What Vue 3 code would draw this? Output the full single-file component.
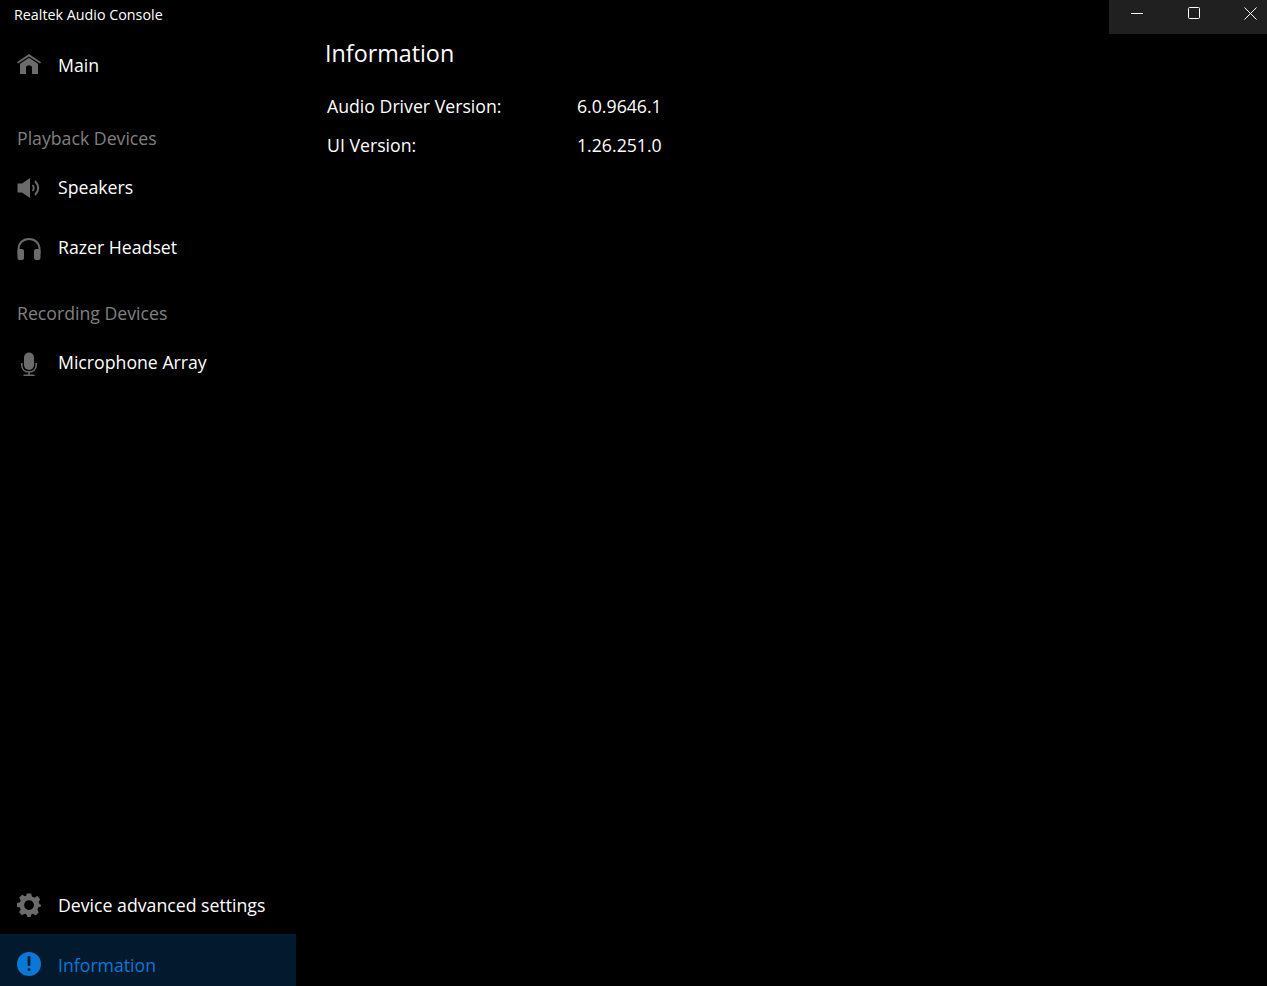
<script setup>
const rows = [
  { label: 'Audio Driver Version:', value: '6.0.9646.1' },
  { label: 'UI Version:', value: '1.26.251.0' },
]
</script>

<template>
  <div class="app">
    <header class="titlebar">
      <div class="app-title">Realtek Audio Console</div>
      <div class="controls">
        <div class="ctl">
          <svg width="12" height="12" viewBox="0 0 12 12"><path d="M0 6.5H12" stroke="#fff" stroke-width="1" /></svg>
        </div>
        <div class="ctl">
          <svg width="12" height="12" viewBox="0 0 12 12"><rect x="0.5" y="0.5" width="11" height="11" rx="1" fill="none" stroke="#fff" stroke-width="1" /></svg>
        </div>
        <div class="ctl">
          <svg width="13" height="13" viewBox="0 0 13 13"><path d="M0.5 0.5L12.5 12.5M12.5 0.5L0.5 12.5" stroke="#fff" stroke-width="1" /></svg>
        </div>
      </div>
    </header>
    <div class="body">
      <aside class="sidebar">
        <div class="nav-item">
          <svg class="ico" width="24" height="24" viewBox="0 0 24 24">
            <path fill="#6b6b6b" d="M12 1 L24 9.3 L23 10.6 L12 3.4 L1 10.6 L0 9.3Z" />
            <path fill="#6b6b6b" d="M12 4.8 L21 10.8 V21 H15 V15 Q15 12.2 12 12.2 Q9 12.2 9 15 V21 H3 V10.8Z" />
          </svg>
          <span>Main</span>
        </div>
        <div class="section first">Playback Devices</div>
        <div class="nav-item">
          <svg class="ico low1" width="24" height="24" viewBox="0 0 24 24">
            <path fill="#6b6b6b" d="M0.5 7.5 H5 L13 2 V22 L5 16.5 H0.5Z" />
            <path fill="none" stroke="#6b6b6b" stroke-width="1.8" d="M15.5 9 Q18 12 15.5 15" />
            <path fill="none" stroke="#6b6b6b" stroke-width="2" d="M18 5 Q24.5 12 18 19" />
          </svg>
          <span>Speakers</span>
        </div>
        <div class="nav-item">
          <svg class="ico low2" width="24" height="24" viewBox="0 0 24 24">
            <path fill="none" stroke="#6b6b6b" stroke-width="2" d="M1.5 17 V12.5 C1.5 6 6 2 12 2 C18 2 22.5 6 22.5 12.5 V17" />
            <rect x="0.5" y="12" width="6.5" height="11" rx="2" fill="#6b6b6b" />
            <rect x="17" y="12" width="6.5" height="11" rx="2" fill="#6b6b6b" />
          </svg>
          <span>Razer Headset</span>
        </div>
        <div class="section">Recording Devices</div>
        <div class="nav-item">
          <svg class="ico low2" width="24" height="24" viewBox="0 0 24 24">
            <rect x="7" y="0.5" width="10" height="17.5" rx="5" fill="#6b6b6b" />
            <path fill="none" stroke="#6b6b6b" stroke-width="1.6" d="M4.8 11 V13 C4.8 17.5 7.8 20 12 20 C16.2 20 19.2 17.5 19.2 13 V11 M12 20 V23 M6.5 23.2 H17.5" />
          </svg>
          <span>Microphone Array</span>
        </div>
        <div class="spacer"></div>
        <div class="nav-item settings">
          <svg class="ico" width="24" height="24" viewBox="0 0 24 24">
            <path fill="#6b6b6b" fill-rule="evenodd" d="M9.8 0.5 H14.2 L14.9 3.6 L17.5 4.7 L20.2 3 L23.2 6.2 L21.5 8.9 L22.5 11 L24 12 V13.2 L21.2 14.6 L20.4 16.6 L21.7 19.5 L18.7 22.4 L16 20.8 L14.3 21.6 L13.6 24 H10.4 L9.6 21.4 L7.8 20.7 L5 22.2 L2.1 19.2 L3.7 16.5 L2.9 14.6 L0 13.7 V10 L3 9.3 L3.7 7.4 L2.2 4.6 L5.2 1.7 L7.9 3.3 L9.2 2.8Z M12 7.2 A4.9 4.9 0 1 0 12.01 7.2Z" />
          </svg>
          <span>Device advanced settings</span>
        </div>
        <div class="nav-item active">
          <svg class="ico" width="24" height="24" viewBox="0 0 24 24">
            <circle cx="12" cy="12" r="12" fill="#0a78d7" />
            <rect x="10.6" y="4" width="2.8" height="10" rx="1" fill="#04192c" />
            <circle cx="12" cy="17.6" r="1.5" fill="#04192c" />
          </svg>
          <span>Information</span>
        </div>
      </aside>
      <main class="content">
        <h1 class="heading">Information</h1>
        <div v-for="row in rows" :key="row.label" class="row">
          <div class="label">{{ row.label }}</div>
          <div>{{ row.value }}</div>
        </div>
      </main>
    </div>
  </div>
</template>

<style>
html, body { margin: 0; background: #000; }
</style>

<style scoped>
.app {
  width: 1267px;
  height: 986px;
  overflow: hidden;
  background: #000;
  color: #fff;
  font-family: "Open Sans", "Noto Sans", sans-serif;
  display: flex;
  flex-direction: column;
}
.titlebar {
  height: 35px;
  flex: none;
  display: flex;
  justify-content: space-between;
  align-items: flex-start;
}
.app-title {
  font-size: 14.3px;
  line-height: 30px;
  padding-left: 14px;
}
.controls {
  display: flex;
  width: 158px;
  height: 34px;
  overflow: hidden;
  background: #202020;
}
.ctl {
  width: 57px;
  flex: none;
  height: 26px;
  display: flex;
  align-items: center;
  justify-content: center;
}
.ctl:first-child { margin-left: -1px; }
.body {
  flex: 1;
  display: flex;
  min-height: 0;
}
.sidebar {
  width: 296px;
  flex: none;
  display: flex;
  flex-direction: column;
  overflow: hidden;
}
.nav-item {
  height: 60px;
  flex: none;
  display: flex;
  align-items: center;
  padding-left: 17px;
  font-size: 17.7px;
  gap: 17px;
}
.low1 { margin-top: 2px; }
.low2 { margin-top: 4px; }
.section {
  height: 55px;
  flex: none;
  box-sizing: border-box;
  padding-top: 24px;
  font-size: 17.7px;
  line-height: 24px;
  padding-left: 17px;
  color: #808080;
}
.section.first {
  height: 62px;
  padding-top: 31px;
}
.spacer { flex: 1; min-height: 0; }
.settings { height: 59px; }
.active {
  background: #031a2e;
  color: #0a78d7;
  margin-bottom: -8px;
}
.active span { margin-top: 2px; }
.content {
  flex: 1;
  padding-left: 29px;
}
.heading {
  margin: 0;
  font-size: 23.3px;
  font-weight: 400;
  line-height: 36px;
}
.row {
  display: flex;
  margin-left: 2px;
  font-size: 17.7px;
  line-height: 39px;
}
.row:first-of-type { margin-top: 16px; }
.label { width: 250px; }
</style>
